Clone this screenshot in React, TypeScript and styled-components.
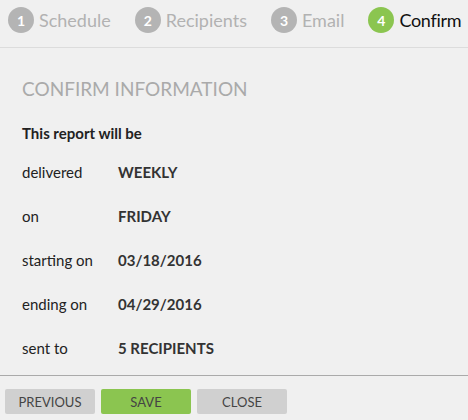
import React from 'react';
import styled, { createGlobalStyle } from 'styled-components';

const GlobalStyle = createGlobalStyle`
  html, body {
    margin: 0;
    padding: 0;
    background: #f0f0f0;
    font-family: Lato, "Open Sans", sans-serif;
  }
`;

const Root = styled.div`
  width: 468px;
  height: 420px;
  display: flex;
  flex-direction: column;
  background: #f0f0f0;
  overflow: hidden;
`;

const Steps = styled.div`
  display: flex;
  align-items: center;
  gap: 24px;
  padding: 0 0 7px 8px;
  border-bottom: 1px solid #dcdcdc;
  box-sizing: border-box;
  height: 48px;
`;

const Step = styled.div<{ active?: boolean }>`
  display: flex;
  align-items: center;
  gap: 5px;
  font-size: 18px;
  white-space: nowrap;
  letter-spacing: ${(p) => (p.active ? '-0.3px' : '0')};
  color: ${(p) => (p.active ? '#111' : '#b2b2b2')};
`;

const Dot = styled.span<{ active?: boolean }>`
  flex: none;
  width: 26px;
  height: 26px;
  border-radius: 50%;
  background: ${(p) => (p.active ? '#8bc550' : '#b4b4b4')};
  color: #fff;
  font-size: 14px;
  font-weight: 700;
  letter-spacing: 0;
  display: grid;
  place-items: center;
`;

const Body = styled.div`
  flex: 1;
  padding: 29px 22px 0;
`;

const Title = styled.h2`
  margin: 0 0 24px;
  font-size: 19px;
  font-weight: 400;
  color: #aaaaaa;
`;

const Lead = styled.p`
  margin: 0 0 8px;
  font-size: 15px;
  font-weight: 700;
  color: #222;
`;

const Rows = styled.div`
  display: grid;
  grid-template-columns: 96px 1fr;
  grid-auto-rows: 44px;
  align-items: center;
  font-size: 15px;
  color: #222;
`;

const Value = styled.span`
  font-weight: 700;
  color: #333;
`;

const Footer = styled.div`
  border-top: 1px solid #aaaaaa;
  display: flex;
  gap: 6px;
  padding: 13px 5px 6px;
`;

const Button = styled.button<{ primary?: boolean }>`
  width: 90px;
  height: 25px;
  border: 0;
  border-radius: 2px;
  background: ${(p) => (p.primary ? '#8bc550' : '#d0d0d0')};
  color: #444;
  font-family: inherit;
  font-size: 13px;
  padding: 0;
`;

const steps = ['Schedule', 'Recipients', 'Email', 'Confirm'];

const rows: [string, string][] = [
  ['delivered', 'WEEKLY'],
  ['on', 'FRIDAY'],
  ['starting on', '03/18/2016'],
  ['ending on', '04/29/2016'],
  ['sent to', '5 RECIPIENTS'],
];

const App: React.FC = () => (
  <>
    <GlobalStyle />
    <Root>
      <Steps>
        {steps.map((s, i) => (
          <Step key={s} active={i === 3}>
            <Dot active={i === 3}>{i + 1}</Dot>
            {s}
          </Step>
        ))}
      </Steps>
      <Body>
        <Title>CONFIRM INFORMATION</Title>
        <Lead>This report will be</Lead>
        <Rows>
          {rows.map(([label, value]) => (
            <React.Fragment key={label}>
              <span>{label}</span>
              <Value>{value}</Value>
            </React.Fragment>
          ))}
        </Rows>
      </Body>
      <Footer>
        <Button>PREVIOUS</Button>
        <Button primary>SAVE</Button>
        <Button>CLOSE</Button>
      </Footer>
    </Root>
  </>
);

export default App;
